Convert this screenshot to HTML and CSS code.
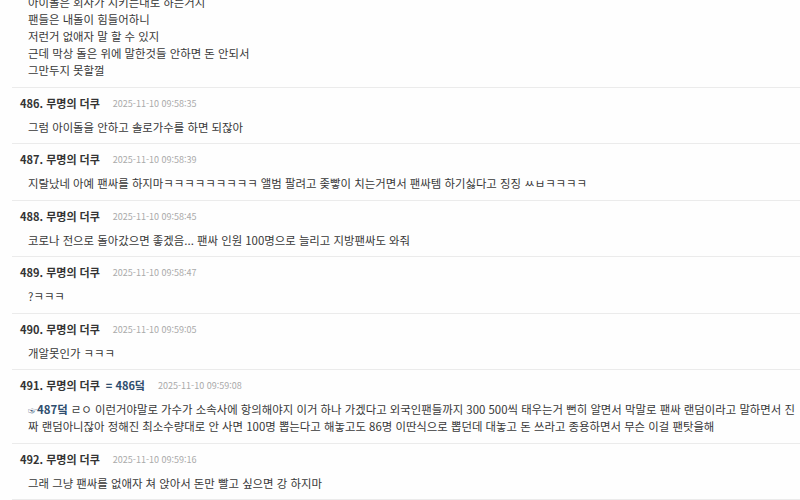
FILE: index.html
```html
<!DOCTYPE html>
<html lang="ko">
<head>
<meta charset="utf-8">
<link rel="stylesheet" href="styles.css">
</head>
<body>
<div class="thread">
  <div class="post">
    <div class="head"><span class="num">485. 무명의 더쿠</span><span class="time">2025-11-10 09:58:21</span></div>
    <div class="body">
      <p>아이돌은 회사가 시키는대로 하는거지</p>
      <p>팬들은 내돌이 힘들어하니</p>
      <p>저런거 없애자 말 할 수 있지</p>
      <p>근데 막상 돌은 위에 말한것들 안하면 돈 안되서</p>
      <p>그만두지 못할껄</p>
    </div>
  </div>
  <div class="post">
    <div class="head"><span class="num">486. 무명의 더쿠</span><span class="time">2025-11-10 09:58:35</span></div>
    <div class="body"><p>그럼 아이돌을 안하고 솔로가수를 하면 되잖아</p></div>
  </div>
  <div class="post">
    <div class="head"><span class="num">487. 무명의 더쿠</span><span class="time">2025-11-10 09:58:39</span></div>
    <div class="body"><p>지랄났네 아예 팬싸를 하지마ㅋㅋㅋㅋㅋㅋㅋㅋㅋ 앨범 팔려고 좆빻이 치는거면서 팬싸템 하기싫다고 징징 ㅆㅂㅋㅋㅋㅋ</p></div>
  </div>
  <div class="post">
    <div class="head"><span class="num">488. 무명의 더쿠</span><span class="time">2025-11-10 09:58:45</span></div>
    <div class="body"><p>코로나 전으로 돌아갔으면 좋겠음... 팬싸 인원 100명으로 늘리고 지방팬싸도 와줘</p></div>
  </div>
  <div class="post">
    <div class="head"><span class="num">489. 무명의 더쿠</span><span class="time">2025-11-10 09:58:47</span></div>
    <div class="body"><p>?ㅋㅋㅋ</p></div>
  </div>
  <div class="post">
    <div class="head"><span class="num">490. 무명의 더쿠</span><span class="time">2025-11-10 09:59:05</span></div>
    <div class="body"><p>개알못인가 ㅋㅋㅋ</p></div>
  </div>
  <div class="post">
    <div class="head"><span class="num">491. 무명의 더쿠</span><span class="reply">= 486덬</span><span class="time">2025-11-10 09:59:08</span></div>
    <div class="body"><p><span class="ref"><span class="hand">☞</span>487덬</span> ㄹㅇ 이런거야말로 가수가 소속사에 항의해야지 이거 하나 가겠다고 외국인팬들까지 300 500씩 태우는거 뻔히 알면서 막말로 팬싸 랜덤이라고 말하면서 진짜 랜덤아니잖아 정해진 최소수량대로 안 사면 100명 뽑는다고 해놓고도 86명 이딴식으로 뽑던데 대놓고 돈 쓰라고 종용하면서 무슨 이걸 팬탓을해</p></div>
  </div>
  <div class="post">
    <div class="head"><span class="num">492. 무명의 더쿠</span><span class="time">2025-11-10 09:59:16</span></div>
    <div class="body"><p>그래 그냥 팬싸를 없애자 쳐 앉아서 돈만 빨고 싶으면 강 하지마</p></div>
  </div>
</div>
</body>
</html>
```
FILE: styles.css
```css
html, body {
  margin: 0;
  padding: 0;
  background: #fefefe;
  overflow: hidden;
}
body {
  font-family: "Noto Sans CJK KR", "Noto Sans", sans-serif;
  color: #333;
}
.thread {
  margin: -37px 0 0 12px;
}
.post {
  border-bottom: 1px solid #ebebeb;
  padding: 7px 0 7.5px 8px;
}
.head {
  display: flex;
  align-items: center;
  height: 17px;
  line-height: 17px;
}
.num {
  font-size: 11px;
  font-weight: bold;
  color: #333;
}
.reply {
  font-size: 11px;
  font-weight: bold;
  color: #2e4d6e;
  margin-left: 6px;
}
.time {
  font-size: 9px;
  color: #aaa;
  margin-left: 13px;
}
.body {
  margin-top: 7px;
  padding-left: 8px;
  font-size: 11.4px;
  line-height: 17px;
  color: #383838;
  word-break: break-all;
}
.body p {
  margin: 0;
}
.ref {
  font-weight: bold;
  color: #2e4d6e;
}
.hand {
  font-size: 9px;
  font-weight: normal;
  line-height: 1;
}
```
